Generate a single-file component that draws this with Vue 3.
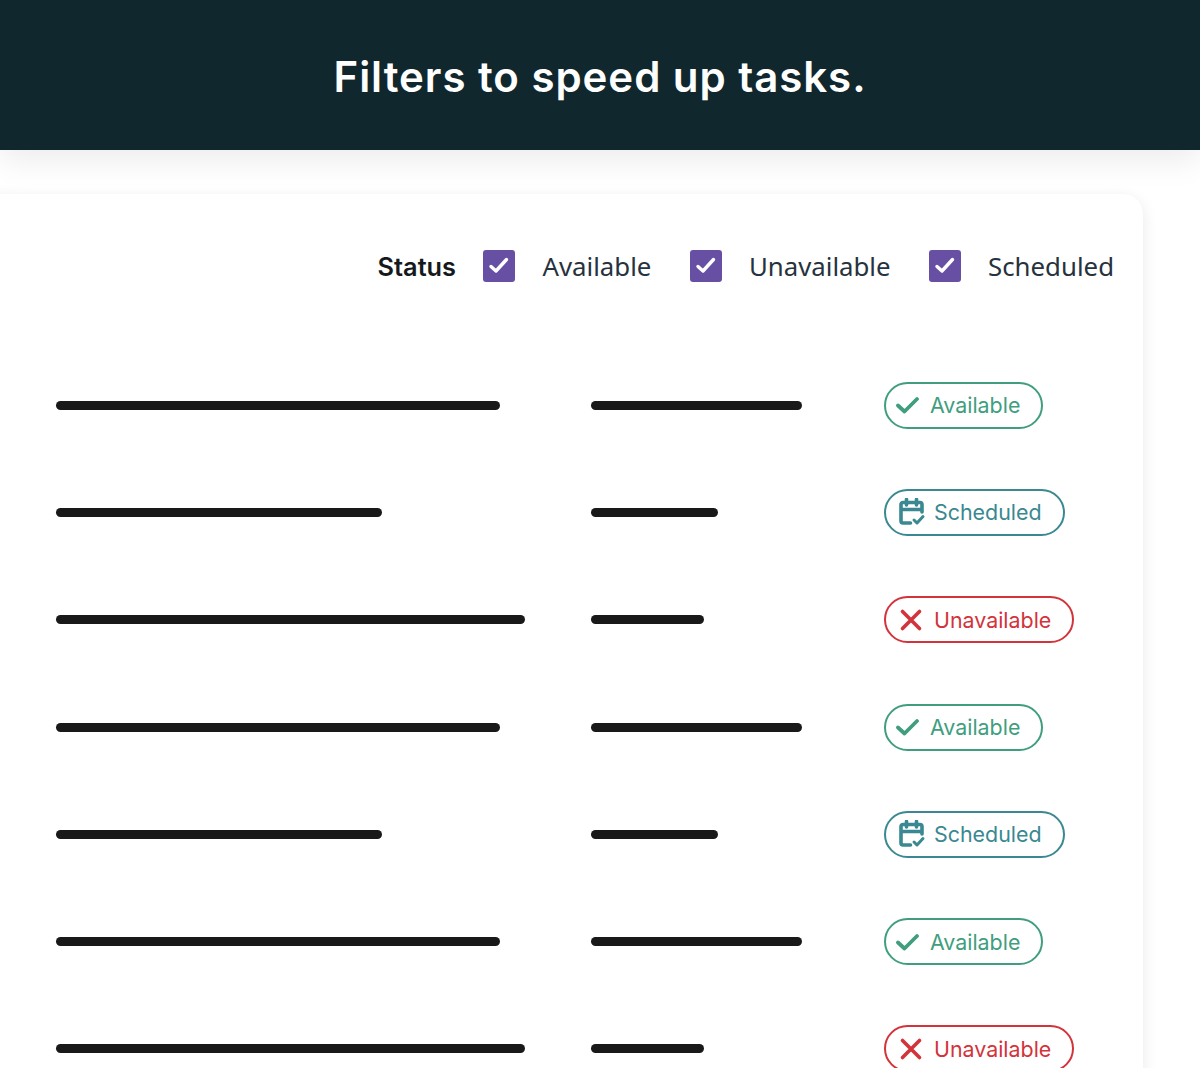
<script setup>
const rows = [
  { a: 444, b: 211, s: 'available' },
  { a: 326, b: 127, s: 'scheduled' },
  { a: 469, b: 113, s: 'unavailable' },
  { a: 444, b: 211, s: 'available' },
  { a: 326, b: 127, s: 'scheduled' },
  { a: 444, b: 211, s: 'available' },
  { a: 469, b: 113, s: 'unavailable' },
]
const labels = { available: 'Available', scheduled: 'Scheduled', unavailable: 'Unavailable' }
const filters = ['Available', 'Unavailable', 'Scheduled']
</script>

<template>
  <div class="page">
    <header class="hero">
      <h1>Filters to speed up tasks.</h1>
    </header>
    <section class="card">
      <div class="filters">
        <span class="status">Status</span>
        <label v-for="f in filters" :key="f" class="filter">
          <span class="box">
            <svg width="32" height="32" viewBox="0 0 32 32" fill="none">
              <path d="M8 16.500l5 4.500 10.500-11.500" stroke="#fff" stroke-width="3.400" stroke-linecap="round" stroke-linejoin="round" />
            </svg>
          </span>
          <span class="flabel">{{ f }}</span>
        </label>
      </div>
      <div class="rows">
        <div v-for="(r, i) in rows" :key="i" class="row">
          <div class="cell"><span class="bar" :style="{ width: r.a + 'px' }"></span></div>
          <div class="cell"><span class="bar" :style="{ width: r.b + 'px' }"></span></div>
          <div class="cell">
            <span class="badge" :class="r.s">
              <svg v-if="r.s === 'available'" class="ico" width="24" height="24" viewBox="0 0 24 24" fill="none">
                <path d="M2 12.500l6.500 6L21 6" stroke="currentColor" stroke-width="3.800" stroke-linecap="round" stroke-linejoin="round" />
              </svg>
              <svg v-else-if="r.s === 'scheduled'" class="ico" width="28" height="28" viewBox="0 0 28 28" fill="none">
                <path d="M12.500 25H5a2 2 0 0 1-2-2V6.500a2 2 0 0 1 2-2h17a2 2 0 0 1 2 2V14M3 11.500h21M8.500 1.500v5.500M18.500 1.500v5.500" stroke="currentColor" stroke-width="3.600" stroke-linecap="round" stroke-linejoin="round" />
                <path d="M16 22l3 3 6-6.500" stroke="currentColor" stroke-width="3" stroke-linecap="round" stroke-linejoin="round" />
              </svg>
              <svg v-else class="ico" width="28" height="28" viewBox="0 0 28 28" fill="none">
                <path d="M4.500 5.500l17 17M21.500 5.500l-17 17" stroke="currentColor" stroke-width="3.600" stroke-linecap="round" />
              </svg>
              <span>{{ labels[r.s] }}</span>
            </span>
          </div>
        </div>
      </div>
    </section>
  </div>
</template>

<style scoped>
.page {
  width: 1200px;
  height: 1068px;
  overflow: hidden;
  background: #fff;
  font-family: Inter, "Liberation Sans", sans-serif;
}
.hero {
  height: 150px;
  background: #11272e;
  display: flex;
  align-items: center;
  justify-content: center;
  box-shadow: 0 10px 30px rgba(0, 0, 0, 0.08);
  position: relative;
}
h1 {
  margin: 4px 0 0;
  color: #fff;
  font-size: 42px;
  font-weight: 600;
  letter-spacing: 0.95px;
  line-height: 1;
}
.card {
  margin: 44px 57px 0 -24px;
  height: 1000px;
  background: #fff;
  border-radius: 20px;
  box-shadow: 0 4px 16px rgba(0, 0, 0, 0.09);
  padding: 0 0 0 80px;
}
.filters {
  height: 144px;
  display: flex;
  align-items: center;
  justify-content: flex-end;
  padding: 0 29px 0 0;
}
.status {
  font-size: 25.300px;
  font-weight: 600;
  color: #16191c;
  margin-right: 27.500px;
}
.filter {
  display: flex;
  align-items: center;
  margin-left: 38.500px;
}
.status + .filter { margin-left: 0; }
.box {
  width: 32px;
  height: 32px;
  border-radius: 3px;
  background: #6750a4;
  display: flex;
}
.flabel {
  margin-left: 27px;
  font-family: "Noto Sans", sans-serif;
  font-size: 25.800px;
  color: #26323d;
}
.rows {
  display: flex;
  flex-direction: column;
  margin-top: 13.500px;
}
.row {
  height: 107.300px;
  display: grid;
  grid-template-columns: 534.500px 293.500px 1fr;
  align-items: center;
}
.cell { display: flex; align-items: center; }
.bar {
  display: block;
  height: 9px;
  border-radius: 4.500px;
  background: #191919;
}
.badge {
  height: 47px;
  box-sizing: border-box;
  display: inline-flex;
  align-items: center;
  border: 2px solid currentColor;
  border-radius: 24px;
  font-size: 21.400px;
  font-weight: 400;
  white-space: nowrap;
}
.available { color: #409e7e; padding: 0 21px 0 10px; width: 159px; }
.scheduled { color: #3a8891; padding: 0 21px 0 12px; width: 180.500px; }
.unavailable { color: #d3333b; padding: 0 21px 0 12px; width: 189.500px; }
.ico { flex: none; }
.available .ico { margin-right: 10px; }
.scheduled .ico { margin-right: 8px; }
.unavailable .ico { margin-right: 8px; }
</style>
